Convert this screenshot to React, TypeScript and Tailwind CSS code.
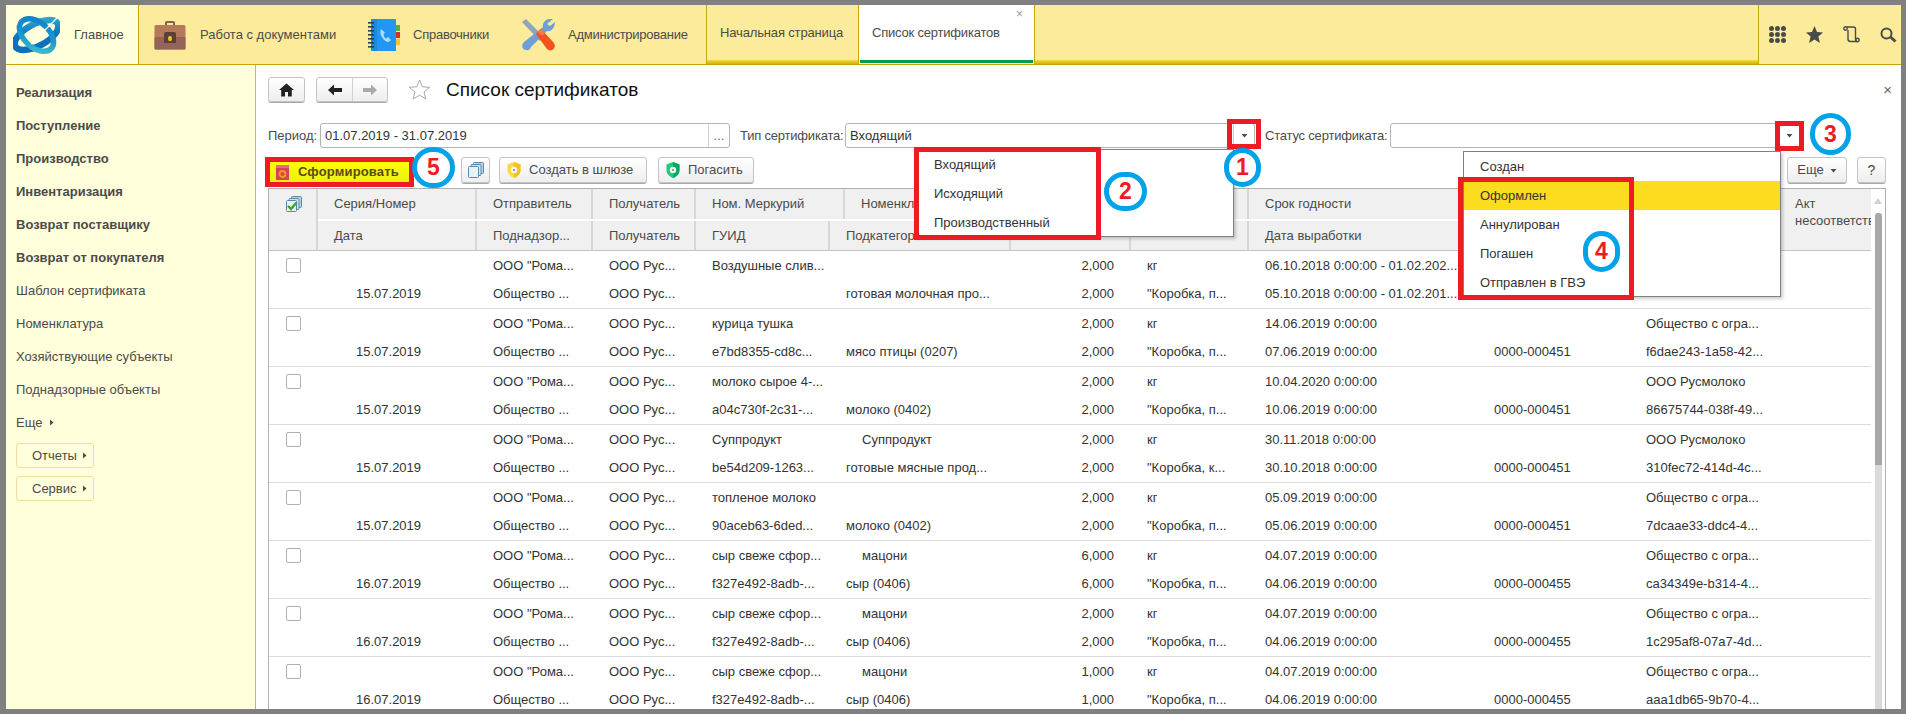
import type { ReactNode } from "react";

const HEAD_LINE1 = "grid-cols-[159px_116px_103px_149px_166px_120px_118px_229px_152px_151px]";
const HEAD_LINE2 = "grid-cols-[159px_116px_103px_134px_181px_120px_118px_229px_152px_151px]";

type Row = {
  date: string;
  name: string;
  guid: string;
  nom?: string;
  sub: string;
  qty: string;
  pack: string;
  d1: string;
  d2: string;
  code?: string;
  l1?: string;
  l2?: string;
};

const ROWS: Row[] = [
  { date: "15.07.2019", name: "Воздушные слив...", guid: "", sub: "готовая молочная про...", qty: "2,000", pack: '"Коробка, п...', d1: "06.10.2018 0:00:00 - 01.02.202...", d2: "05.10.2018 0:00:00 - 01.02.201..." },
  { date: "15.07.2019", name: "курица тушка", guid: "e7bd8355-cd8c...", sub: "мясо птицы (0207)", qty: "2,000", pack: '"Коробка, п...', d1: "14.06.2019 0:00:00", d2: "07.06.2019 0:00:00", code: "0000-000451", l1: "Общество с огра...", l2: "f6dae243-1a58-42..." },
  { date: "15.07.2019", name: "молоко сырое 4-...", guid: "a04c730f-2c31-...", sub: "молоко (0402)", qty: "2,000", pack: '"Коробка, п...', d1: "10.04.2020 0:00:00", d2: "10.06.2019 0:00:00", code: "0000-000451", l1: "ООО Русмолоко", l2: "86675744-038f-49..." },
  { date: "15.07.2019", name: "Суппродукт", guid: "be54d209-1263...", nom: "Суппродукт", sub: "готовые мясные прод...", qty: "2,000", pack: '"Коробка, к...', d1: "30.11.2018 0:00:00", d2: "30.10.2018 0:00:00", code: "0000-000451", l1: "ООО Русмолоко", l2: "310fec72-414d-4c..." },
  { date: "15.07.2019", name: "топленое молоко", guid: "90aceb63-6ded...", sub: "молоко (0402)", qty: "2,000", pack: '"Коробка, п...', d1: "05.09.2019 0:00:00", d2: "05.06.2019 0:00:00", code: "0000-000451", l1: "Общество с огра...", l2: "7dcaae33-ddc4-4..." },
  { date: "16.07.2019", name: "сыр свеже сфор...", guid: "f327e492-8adb-...", nom: "мацони", sub: "сыр (0406)", qty: "6,000", pack: '"Коробка, п...', d1: "04.07.2019 0:00:00", d2: "04.06.2019 0:00:00", code: "0000-000455", l1: "Общество с огра...", l2: "ca34349e-b314-4..." },
  { date: "16.07.2019", name: "сыр свеже сфор...", guid: "f327e492-8adb-...", nom: "мацони", sub: "сыр (0406)", qty: "2,000", pack: '"Коробка, п...', d1: "04.07.2019 0:00:00", d2: "04.06.2019 0:00:00", code: "0000-000455", l1: "Общество с огра...", l2: "1c295af8-07a7-4d..." },
  { date: "16.07.2019", name: "сыр свеже сфор...", guid: "f327e492-8adb-...", nom: "мацони", sub: "сыр (0406)", qty: "1,000", pack: '"Коробка, п...', d1: "04.07.2019 0:00:00", d2: "04.06.2019 0:00:00", code: "0000-000455", l1: "Общество с огра...", l2: "aaa1db65-9b70-4..." },
];

function Caret({ right = false }: { right?: boolean }) {
  return (
    <svg width="7" height="7" viewBox="0 0 7 7" className="shrink-0">
      <path d={right ? "M2 0.5 L5.5 3.5 L2 6.5 Z" : "M0.5 2 L6.5 2 L3.5 5.5 Z"} fill="#4b4b4b" />
    </svg>
  );
}

function Logo() {
  return (
    <svg width="47" height="42" viewBox="0 0 47 42" className="shrink-0">
      <defs>
        <linearGradient id="lg1" x1="0" y1="0" x2="1" y2="1">
          <stop offset="0" stopColor="#0f7fca" />
          <stop offset="0.55" stopColor="#1c97cb" />
          <stop offset="1" stopColor="#45c4cc" />
        </linearGradient>
        <linearGradient id="lg2" x1="1" y1="0" x2="0" y2="1">
          <stop offset="0" stopColor="#35b3cf" />
          <stop offset="0.5" stopColor="#0b74c0" />
          <stop offset="1" stopColor="#0a6fb8" />
        </linearGradient>
      </defs>
      <ellipse cx="23.5" cy="21" rx="24" ry="11" transform="rotate(-28 23.5 21)" fill="none" stroke="url(#lg2)" strokeWidth="6.5" />
      <ellipse cx="23.5" cy="21" rx="20" ry="12.5" transform="rotate(42 23.5 21)" fill="none" stroke="url(#lg1)" strokeWidth="5.5" />
      <path d="M44 4 L30 18 L18 30" fill="none" stroke="#fff" strokeWidth="1.2" />
    </svg>
  );
}

function Briefcase() {
  return (
    <svg width="32" height="30" viewBox="0 0 32 30" className="shrink-0">
      <path d="M11 6 V2.5 Q11 1 13 1 H19 Q21 1 21 2.5 V6 H19 V3 H13 V6 Z" fill="#8a5f50" />
      <rect x="0.5" y="5" width="31" height="24.5" rx="1.5" fill="#b6795a" />
      <rect x="0.5" y="17" width="31" height="12.5" rx="1" fill="#94645a" />
      <path d="M10 17 V14 Q10 12 12 12 H20 Q22 12 22 14 V17 V23 H10 Z" fill="#5c3f3a" />
      <rect x="14.2" y="16" width="3.6" height="5" rx="1.5" fill="#f5c518" />
    </svg>
  );
}

function BookIcon() {
  return (
    <svg width="32" height="32" viewBox="0 0 32 32" className="shrink-0">
      <rect x="3" y="0" width="25" height="32" rx="1" fill="#1e88e5" />
      <rect x="9" y="0" width="19" height="32" fill="#2196f3" />
      <rect x="28" y="6" width="4" height="6" fill="#4caf50" />
      <rect x="28" y="13" width="4" height="6" fill="#d32f2f" />
      <rect x="28" y="20" width="4" height="6" fill="#fbc02d" />
      {[3, 7, 11, 15, 19, 23, 27].map((y) => (
        <rect key={y} x="0" y={y} width="6" height="1.6" fill="#2c3e50" />
      ))}
      <path d="M13 10 Q12 12 12.5 15 Q14 20 19 23 Q21 23.5 23 21 L20 18 L18 19.5 Q15.5 18 15.5 15 L17 13.5 Z" fill="#a9dcf7" />
    </svg>
  );
}

function ToolsIcon() {
  return (
    <svg width="34" height="32" viewBox="0 0 34 32" className="shrink-0">
      <path d="M1 3 L5 0 L23 18 L19 22 Z" fill="#8fa6b8" />
      <path d="M32 0 C26 -1 21 3 22 8 L3 23 C0 26 1 31 5 31 C8 32 9 30 10 28 L26 12 C30 13 34 9 34 3 L29 7 L26 5 Z" fill="#6f9fd8" />
      <path d="M15 15 L20 10 L33 24 Q35 28 32 30.5 Q29 32.5 26 30 Z" fill="#f4511e" />
      <path d="M17 13 L20 10 L24 14 L21 17 Z" fill="#ff7a45" />
    </svg>
  );
}

function HomeIcon() {
  return (
    <svg width="15" height="14" viewBox="0 0 15 14">
      <path d="M7.5 0.5 L15 7 H12.8 V13.5 H9 V9 H6 V13.5 H2.2 V7 H0 Z" fill="#222" />
    </svg>
  );
}

function ArrowIcon({ left }: { left?: boolean }) {
  return (
    <svg width="14" height="12" viewBox="0 0 14 12">
      <path d={left ? "M0 6 L6 0.5 V4 H14 V8 H6 V11.5 Z" : "M14 6 L8 0.5 V4 H0 V8 H8 V11.5 Z"} fill={left ? "#222" : "#aaa"} />
    </svg>
  );
}

function Shield({ color, dark }: { color: string; dark: string }) {
  return (
    <svg width="14" height="16" viewBox="0 0 14 16" className="shrink-0">
      <path d="M7 0 L13.5 2.5 V8 C13.5 12 10.5 14.5 7 16 C3.5 14.5 0.5 12 0.5 8 V2.5 Z" fill={color} />
      <path d="M7 0 L13.5 2.5 V8 C13.5 12 10.5 14.5 7 16 Z" fill={dark} />
      <circle cx="7" cy="8" r="3.2" fill="#f4f4f4" />
      <circle cx="7" cy="8" r="1.1" fill="#888" />
    </svg>
  );
}

function Stack({ check = false }: { check?: boolean }) {
  return (
    <svg width="16" height="16" viewBox="0 0 16 16" className="shrink-0">
      <rect x="5.5" y="0.5" width="10" height="11" rx="1" fill="#b9d3e6" stroke="#5b8aa8" />
      <rect x="3" y="2.5" width="10" height="11" rx="1" fill="#cfe2ef" stroke="#5b8aa8" />
      <rect x="0.5" y="4.5" width="10" height="11" rx="1" fill="#e6f1f8" stroke="#5b8aa8" />
      {check && <path d="M2 10 L5 13 L10.5 6.5" fill="none" stroke="#3aa51f" strokeWidth="2.4" />}
    </svg>
  );
}

function Btn({ className, children }: { className: string; children: ReactNode }) {
  return (
    <div className={`flex h-[26px] shrink-0 items-center rounded-[3px] border border-[#c4c4c4] bg-linear-to-b from-white to-[#eeeeee] shadow-[0_1px_0_#a8a8a8] ${className}`}>
      {children}
    </div>
  );
}

function Field({ value, seg }: { value: string; seg: ReactNode }) {
  return (
    <div className="flex h-[25px] w-[410px] shrink-0 items-center rounded-[3px] border border-[#b4b4b4] bg-white">
      <span className="flex-1 pl-1 text-[#333]">{value}</span>
      <span className="flex h-full w-[21px] items-center justify-center border-l border-[#d0d0d0]">{seg}</span>
    </div>
  );
}

function RedBox({ className }: { className: string }) {
  return <div className={`pointer-events-none absolute border-[5px] border-[#ed1c24] ${className}`} />;
}

function Mark({ n, className }: { n: number; className: string }) {
  return (
    <div className={`absolute flex items-center justify-center rounded-full border-[5px] border-[#00a2e8] bg-white text-[23px] font-bold leading-none text-[#ed1c24] ${className}`}>
      {n}
    </div>
  );
}

function MenuItem({ label, active = false, pad }: { label: string; active?: boolean; pad: string }) {
  return (
    <div className={`flex h-[29px] items-center text-[#333] ${pad} ${active ? "bg-[#fbdc1e]" : ""}`}>{label}</div>
  );
}

function HCell({ label }: { label?: string }) {
  return (
    <div className="flex items-center overflow-hidden whitespace-nowrap border-r-2 border-[#d6d6d6] bg-[#f0f0f0] pl-[16px] text-[#4b4b4b]">
      {label}
    </div>
  );
}

function Cell({ children, className = "pl-[16px]" }: { children?: ReactNode; className?: string }) {
  return <div className={`flex items-center overflow-hidden whitespace-nowrap ${className}`}>{children}</div>;
}

export default function App() {
  const sideBold = ["Реализация", "Поступление", "Производство", "Инвентаризация", "Возврат поставщику", "Возврат от покупателя"];
  const sideNorm = ["Шаблон сертификата", "Номенклатура", "Хозяйствующие субъекты", "Поднадзорные объекты"];

  return (
    <div className="relative h-[714px] w-[1906px] overflow-hidden bg-[#808080] pb-[5px] pl-[6px] pr-[5px] pt-[5px] font-['Liberation_Sans',Arial,sans-serif] text-[13px] text-[#4b4b4b]">
      <div className="flex h-full flex-col bg-white">
        {/* top bar */}
        <div className="flex h-[60px] shrink-0 border-b border-[#c9a60c] bg-[#fbeb9b]">
          <div className="flex w-[133px] shrink-0 items-center border-r border-[#c9a60c] bg-[#ffffdb] pl-[7px]">
            <Logo />
            <span className="ml-[14px]">Главное</span>
          </div>
          <div className="flex w-[567px] shrink-0 items-center whitespace-nowrap pl-[15px]">
            <Briefcase />
            <span className="ml-[14px] w-[135px]">Работа с документами</span>
            <div className="ml-[33px]"><BookIcon /></div>
            <span className="ml-[13px] w-[78px] tracking-[-0.25px]">Справочники</span>
            <div className="ml-[30px]"><ToolsIcon /></div>
            <span className="ml-[13px] tracking-[-0.25px]">Администрирование</span>
          </div>
          <div className="flex w-[152px] shrink-0 flex-col border-l border-[#c9a60c]">
            <div className="flex flex-1 items-center whitespace-nowrap pl-[13px] tracking-[-0.15px]">Начальная страница</div>
            <div className="h-[4px] bg-linear-to-b from-[#f6dc3c] to-[#cfae10]" />
          </div>
          <div className="relative flex w-[177px] shrink-0 flex-col border-x border-[#c9a60c] bg-white">
            <div className="flex flex-1 items-center whitespace-nowrap pl-[13px] tracking-[-0.2px]">Список сертификатов</div>
            <span className="absolute right-[11px] top-[3px] text-[12px] leading-none text-[#999]">×</span>
            <div className="mx-px mb-px h-[3px] bg-[#0a9b48]" />
          </div>
          <div className="flex flex-1 flex-col justify-end">
            <div className="h-[4px] bg-linear-to-b from-[#f6dc3c] to-[#cfae10]" />
          </div>
          <div className="flex w-[143px] shrink-0 items-center gap-[20px] border-l border-[#c9a60c] pl-[10px]">
            <svg width="17" height="17" viewBox="0 0 17 17" className="shrink-0">
              {[2.5, 8.5, 14.5].flatMap((y) =>
                [2.5, 8.5, 14.5].map((x) => <circle key={`${x}-${y}`} cx={x} cy={y} r="2.5" fill="#4a4a4a" />),
              )}
            </svg>
            <svg width="17" height="17" viewBox="0 0 17 17" className="shrink-0">
              <path d="M8.5 0 L11 6 L17 6.5 L12.4 10.4 L13.9 17 L8.5 13.5 L3.1 17 L4.6 10.4 L0 6.5 L6 6 Z" fill="#4a4a4a" />
            </svg>
            <svg width="17" height="17" viewBox="0 0 17 17" className="shrink-0" fill="none" stroke="#4a4a4a" strokeWidth="1.4">
              <circle cx="2.5" cy="2.5" r="1.7" />
              <path d="M4 1 H10.5 Q12.5 1 12.5 3 V12.5 Q12.5 14 13.5 15.5 H7.5 Q5 15.5 5 13 V4" />
              <circle cx="14.5" cy="14" r="1.7" />
            </svg>
            <svg width="17" height="16" viewBox="0 0 17 16" className="shrink-0" fill="none" stroke="#4a4a4a">
              <circle cx="6.5" cy="6.5" r="5" strokeWidth="2" />
              <path d="M10.5 10 L15.5 14.5" strokeWidth="3" />
            </svg>
          </div>
        </div>

        <div className="flex min-h-0 flex-1">
          {/* sidebar */}
          <div className="flex w-[250px] shrink-0 flex-col border-r border-[#b5b5a0] bg-[#ffffdb] pl-[10px] pt-[11px]">
            {sideBold.map((s) => (
              <div key={s} className="flex h-[33px] items-center font-bold">{s}</div>
            ))}
            {sideNorm.map((s) => (
              <div key={s} className="flex h-[33px] items-center">{s}</div>
            ))}
            <div className="flex h-[33px] items-center gap-[6px]">Еще <Caret right /></div>
            <div className="mt-[4px] flex h-[25px] w-[78px] items-center gap-[4px] rounded-[3px] border border-[#ecdf9a] pl-[15px]">Отчеты <Caret right /></div>
            <div className="mt-[8px] flex h-[25px] w-[78px] items-center gap-[4px] rounded-[3px] border border-[#ecdf9a] pl-[15px]">Сервис <Caret right /></div>
          </div>

          {/* main */}
          <div className="flex min-w-0 flex-1 flex-col overflow-hidden pl-[12px] pr-[15px]">
            <div className="mt-[12px] flex h-[25px] shrink-0 items-center">
              <Btn className="!h-[25px] w-[37px] justify-center"><HomeIcon /></Btn>
              <Btn className="ml-[11px] !h-[25px] w-[72px]">
                <span className="flex h-full w-[36px] items-center justify-center border-r border-[#d0d0d0]"><ArrowIcon left /></span>
                <span className="flex h-full flex-1 items-center justify-center"><ArrowIcon /></span>
              </Btn>
              <svg width="23" height="21" viewBox="0 0 23 21" className="ml-[20px] shrink-0">
                <path d="M11.5 1 L14.3 7.8 L21.8 8.3 L16 13 L17.9 20 L11.5 16.2 L5.1 20 L7 13 L1.2 8.3 L8.7 7.8 Z" fill="none" stroke="#a8a8a8" />
              </svg>
              <span className="ml-[15px] mt-[2px] text-[19px] text-[#111]">Список сертификатов</span>
              <span className="ml-auto -mr-[6px] text-[15px] leading-none text-[#666]">×</span>
            </div>

            <div className="mt-[21px] flex h-[25px] shrink-0 items-center whitespace-nowrap">
              <span className="w-[52px] shrink-0">Период:</span>
              <Field value="01.07.2019 - 31.07.2019" seg={<span className="text-[#666]">...</span>} />
              <span className="ml-[10px] w-[105px] shrink-0 tracking-[-0.2px]">Тип сертификата:</span>
              <Field value="Входящий" seg={<Caret />} />
              <span className="ml-[10px] w-[125px] shrink-0 tracking-[-0.2px]">Статус сертификата:</span>
              <Field value="" seg={<Caret />} />
            </div>

            <div className="mt-[9px] flex h-[26px] shrink-0 items-center">
              <div className="ml-[2px] mt-[4px] flex h-[22px] w-[139px] shrink-0 items-center bg-linear-to-b from-[#ffff00] to-[#eeee10] pl-[6px]">
                <svg width="13" height="15" viewBox="0 0 13 15" className="shrink-0">
                  <rect width="13" height="15" fill="#d9415a" />
                  <rect width="13" height="3" fill="#e86a80" />
                  <circle cx="6.5" cy="9" r="3" fill="none" stroke="#f59a1c" strokeWidth="1.8" />
                </svg>
                <span className="ml-[9px] font-bold tracking-[0.15px] text-[#5c4a10]">Сформировать</span>
              </div>
              <Btn className="ml-[52px] w-[29px] justify-center"><Stack /></Btn>
              <Btn className="ml-[9px] w-[148px] pl-[7px]">
                <Shield color="#ffd83d" dark="#f5c21c" />
                <span className="ml-[8px]">Создать в шлюзе</span>
              </Btn>
              <Btn className="ml-[11px] w-[96px] pl-[7px]">
                <Shield color="#1ecb7a" dark="#0aa860" />
                <span className="ml-[8px]">Погасить</span>
              </Btn>
              <Btn className="ml-auto w-[60px] justify-center gap-[6px]">Еще <Caret /></Btn>
              <Btn className="ml-[10px] w-[29px] justify-center text-[14px]">?</Btn>
            </div>

            {/* table */}
            <div className="mt-[5px] flex min-h-0 flex-1 border-x border-t border-[#b0b0b0]">
              <div className="w-[1602px] shrink-0">
                <div className="flex h-[62px] border-b border-[#c4c4c4]">
                  <div className="w-[49px] shrink-0 border-r-2 border-[#d6d6d6] bg-[#f0f0f0] pl-[17px] pt-[7px]">
                    <Stack check />
                  </div>
                  <div className="flex w-[1463px] shrink-0 flex-col gap-[2px]">
                    <div className={`grid h-[30px] ${HEAD_LINE1}`}>
                      {["Серия/Номер", "Отправитель", "Получатель", "Ном. Меркурий", "Номенклатура", "", "", "Срок годности", "", ""].map((h, i) => (
                        <HCell key={i} label={h} />
                      ))}
                    </div>
                    <div className={`grid h-[29px] ${HEAD_LINE2}`}>
                      {["Дата", "Поднадзор...", "Получатель", "ГУИД", "Подкатегория", "", "", "Дата выработки", "", ""].map((h, i) => (
                        <HCell key={i} label={h} />
                      ))}
                    </div>
                  </div>
                  <div className="w-[90px] shrink-0 overflow-hidden whitespace-nowrap bg-[#f0f0f0] pl-[14px] pt-[6px] leading-[17px]">
                    Акт<br />несоответствие
                  </div>
                </div>

                {ROWS.map((r, i) => (
                  <div key={i} className="flex h-[58px] border-b border-[#dcdcdc] text-[#333]">
                    <div className="w-[49px] shrink-0 pl-[17px] pt-[7px]">
                      <div className="h-[15px] w-[15px] rounded-[2px] border border-[#b0b0b0]" />
                    </div>
                    <div className="flex w-[1463px] shrink-0 flex-col">
                      <div className={`grid h-[29px] ${HEAD_LINE1}`}>
                        <Cell />
                        <Cell>ООО "Рома...</Cell>
                        <Cell>ООО Рус...</Cell>
                        <Cell>{r.name}</Cell>
                        <Cell className="pl-[17px]">{r.nom}</Cell>
                        <Cell className="justify-end pr-[17px]">{r.qty}</Cell>
                        <Cell>кг</Cell>
                        <Cell>{r.d1}</Cell>
                        <Cell />
                        <Cell>{r.l1}</Cell>
                      </div>
                      <div className={`grid h-[28px] ${HEAD_LINE2}`}>
                        <Cell className="pl-[38px]">{r.date}</Cell>
                        <Cell>Общество ...</Cell>
                        <Cell>ООО Рус...</Cell>
                        <Cell>{r.guid}</Cell>
                        <Cell>{r.sub}</Cell>
                        <Cell className="justify-end pr-[17px]">{r.qty}</Cell>
                        <Cell>{r.pack}</Cell>
                        <Cell>{r.d2}</Cell>
                        <Cell>{r.code}</Cell>
                        <Cell>{r.l2}</Cell>
                      </div>
                    </div>
                  </div>
                ))}
              </div>

              {/* scrollbar */}
              <div className="flex w-[14px] shrink-0 flex-col items-center pt-[9px]">
                <svg width="8" height="6" viewBox="0 0 8 6" className="shrink-0">
                  <path d="M0 6 L4 0 L8 6 Z" fill="#d0d0d0" />
                </svg>
                <div className="mt-[9px] h-[252px] w-[7px] shrink-0 rounded-t-[3px] bg-[#a8a8a8]" />
                <div className="w-[7px] flex-1 bg-[#dadada]" />
              </div>
            </div>
          </div>
        </div>
      </div>

      {/* dropdown: type */}
      <div className="absolute left-[914px] top-[149px] h-[88px] w-[320px] border border-[#808080] bg-white shadow-[2px_2px_3px_rgba(0,0,0,0.2)]">
        <MenuItem pad="pl-[19px]" label="Входящий" />
        <MenuItem pad="pl-[19px]" label="Исходящий" />
        <MenuItem pad="pl-[19px]" label="Производственный" />
      </div>
      {/* dropdown: status */}
      <div className="absolute left-[1463px] top-[151px] h-[146px] w-[318px] border border-[#808080] bg-white shadow-[2px_2px_3px_rgba(0,0,0,0.2)]">
        <MenuItem pad="pl-[16px]" label="Создан" />
        <MenuItem pad="pl-[16px]" label="Оформлен" active />
        <MenuItem pad="pl-[16px]" label="Аннулирован" />
        <MenuItem pad="pl-[16px]" label="Погашен" />
        <MenuItem pad="pl-[16px]" label="Отправлен в ГВЭ" />
      </div>

      {/* annotations */}
      <RedBox className="left-[1227px] top-[119px] h-[30px] w-[34px]" />
      <RedBox className="left-[1775px] top-[121px] h-[30px] w-[29px]" />
      <RedBox className="left-[914px] top-[147px] h-[93px] w-[187px]" />
      <RedBox className="left-[1458px] top-[177px] h-[123px] w-[176px]" />
      <RedBox className="left-[265px] top-[157px] h-[30px] w-[149px]" />
      <Mark n={1} className="left-[1224px] top-[148px] h-[39px] w-[37px]" />
      <Mark n={2} className="left-[1104px] top-[172px] h-[39px] w-[43px]" />
      <Mark n={3} className="left-[1810px] top-[113px] h-[42px] w-[41px]" />
      <Mark n={4} className="left-[1583px] top-[231px] h-[41px] w-[37px]" />
      <Mark n={5} className="left-[412px] top-[147px] h-[41px] w-[43px]" />
    </div>
  );
}
